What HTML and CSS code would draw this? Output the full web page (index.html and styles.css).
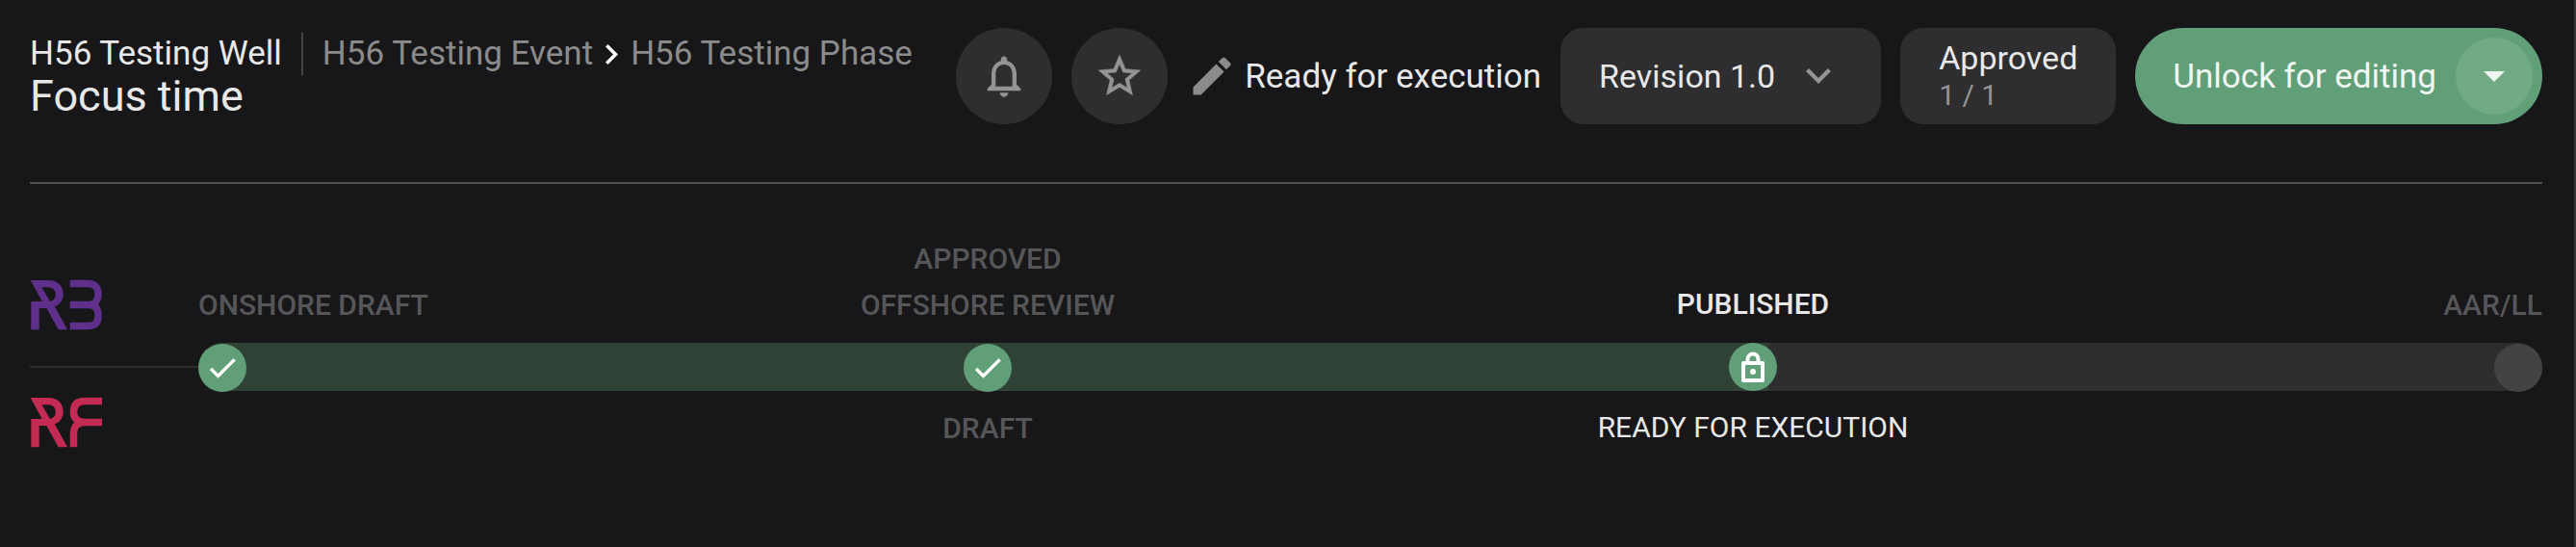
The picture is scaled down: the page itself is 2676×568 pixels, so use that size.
FILE: index.html
```html
<!DOCTYPE html>
<html lang="en">
<head>
  <meta charset="UTF-8">
  <title>Focus time</title>
  <meta name="viewport" content="width=device-width, initial-scale=1.0">
  <link rel="stylesheet" href="styles.css">
</head>
<body>

<header class="header">
  <div class="titles">
    <nav class="breadcrumb" aria-label="Breadcrumb">
      <a class="well" href="#">H56 Testing Well</a>
      <a href="#">H56 Testing Event</a>
      <svg class="crumb-arrow" viewBox="8.590 6 7.410 12"><path d="M10 6L8.590 7.410 13.170 12l-4.580 4.590L10 18l6-6z"/></svg>
      <a href="#">H56 Testing Phase</a>
    </nav>
    <h1>Focus time</h1>
  </div>

  <div class="actions">
    <button class="icon-btn" aria-label="Notifications">
      <svg viewBox="0 0 24 24"><path d="M12 22c1.100 0 2-.9 2-2h-4c0 1.100.9 2 2 2zm6-6v-5c0-3.070-1.630-5.640-4.500-6.320V4c0-.83-.67-1.500-1.500-1.500s-1.500.67-1.500 1.500v.68C7.640 5.360 6 7.920 6 11v5l-2 2v1h16v-1l-2-2zm-2 1H8v-6c0-2.480 1.510-4.500 4-4.500s4 2.020 4 4.500v6z"/></svg>
    </button>
    <button class="icon-btn" aria-label="Favourite">
      <svg class="star" viewBox="0 0 24 24"><path d="M22 9.240l-7.190-.62L12 2 9.190 8.630 2 9.240l5.460 4.730L5.820 21 12 17.270 18.180 21l-1.630-7.030L22 9.240zM12 15.400l-3.760 2.270 1-4.280-3.320-2.880 4.380-.38L12 6.100l1.710 4.040 4.380.38-3.320 2.880 1 4.280L12 15.400z"/></svg>
    </button>
    <div class="status">
      <svg viewBox="0 0 24 24"><path d="M3 17.250V21h3.750L17.810 9.940l-3.750-3.750L3 17.250zM20.710 7.040c.39-.39.39-1.020 0-1.410l-2.340-2.340c-.39-.39-1.020-.39-1.410 0l-1.830 1.830 3.750 3.750 1.830-1.830z"/></svg>
      <span>Ready for execution</span>
    </div>
    <button class="card revision">
      <span>Revision 1.0</span>
      <svg viewBox="6 8.590 12 7.410"><path d="M16.590 8.590L12 13.170 7.410 8.590 6 10l6 6 6-6z"/></svg>
    </button>
    <div class="card approved">
      <span>Approved</span>
      <span class="count">1 / 1</span>
    </div>
    <div class="unlock">
      <button class="unlock-main">Unlock for editing</button>
      <button class="unlock-more" aria-label="More options">
        <svg viewBox="0 0 22 11"><path d="M0 0h22L11 11z"/></svg>
      </button>
    </div>
  </div>
</header>

<main class="progress">
  <div class="logos">
    <svg class="logo rb" viewBox="0 0 76 53" role="img" aria-label="RB">
      <path class="solid" d="M.7 1H19c10 0 15.700 6 15.700 14.500 0 6-3.500 11-9 12.800L39 52.300h-9.300L17.300 30H9.700v22.300H1.300V23h11.400zM12.300 8.300L21 23c3.700-.8 5.700-3.500 5.700-7.300 0-4.600-2.900-7.400-7.700-7.400z"/>
      <path d="M41.700 4.500H60c8 0 11 4.500 11 10.500S68 26.500 62 26.500H41.700M62 26.500c6 0 9 4 9 10.500v1c0 7-3 10.500-11 10.500H41.700"/>
    </svg>
    <svg class="logo rf" viewBox="0 0 76 53" role="img" aria-label="RF">
      <path class="solid" d="M.7 1H19c10 0 15.700 6 15.700 14.500 0 6-3.500 11-9 12.800L39 52.300h-9.300L17.300 30H9.700v22.300H1.300V23h11.400zM12.300 8.300L21 23c3.700-.8 5.700-3.500 5.700-7.300 0-4.600-2.900-7.400-7.700-7.400z"/>
      <path d="M75 4.500H57c-8 0-11.500 4-11.500 11s4 11 11.500 11h18M57 26.500c-7 0-11.500 4-11.500 11v14.800"/>
    </svg>
  </div>
  <ol class="stages">
    <li class="stage first">
      <div class="above"><span>Onshore draft</span></div>
      <div class="dot done"><svg viewBox="0 0 24 24"><path d="M9 16.170L4.830 12l-1.420 1.410L9 19 21 7l-1.410-1.410z"/></svg></div>
      <div class="below"></div>
    </li>
    <li class="stage">
      <div class="above"><span>Approved</span><span>Offshore review</span></div>
      <div class="dot done"><svg viewBox="0 0 24 24"><path d="M9 16.170L4.830 12l-1.420 1.410L9 19 21 7l-1.410-1.410z"/></svg></div>
      <div class="below">Draft</div>
    </li>
    <li class="stage current">
      <div class="above"><span>Published</span></div>
      <div class="dot done"><svg class="lock" viewBox="0 0 24 32"><path d="M6.500 11V8a5.500 5.500 0 0 1 11 0v3M2 12h20v18H2z"/><circle cx="12" cy="21" r="3"/></svg></div>
      <div class="below">Ready for execution</div>
    </li>
    <li class="stage last">
      <div class="above"><span>AAR/LL</span></div>
      <div class="dot"></div>
      <div class="below"></div>
    </li>
  </ol>
</main>

</body>
</html>
```
FILE: styles.css
```css
* { box-sizing: border-box; }
body { margin: 0; min-height: 100vh; padding: 0 33px 0 31px; background: #171719; color: #e8e8e8; font-family: Roboto, sans-serif; font-size: 35px; border-right: 2px solid #353537; }
button { font: inherit; color: inherit; border: none; padding: 0; cursor: pointer; }
a { color: inherit; text-decoration: none; }
svg { display: block; flex: none; }

.header { display: flex; justify-content: space-between; align-items: flex-start; padding: 29px 0 60px; border-bottom: 2px solid #505052; }
.titles { padding-top: 5px; }
.breadcrumb { display: flex; align-items: center; height: 44px; line-height: 44px; color: #8b8b8b; white-space: nowrap; }
.breadcrumb .well { color: #e8e8e8; padding-right: 20px; margin-right: 20px; border-right: 2px solid #444446; }
.crumb-arrow { width: 13px; height: 21px; margin: 0 13px; fill: #fff; }
h1 { margin: 0; font-size: 45px; line-height: 44px; font-weight: 400; }

.actions { display: flex; align-items: center; gap: 20px; white-space: nowrap; }
.icon-btn { width: 100px; height: 100px; border-radius: 50%; background: #2e2e30; display: flex; align-items: center; justify-content: center; }
.icon-btn svg { width: 52px; height: 52px; fill: #949494; }
.icon-btn .star { stroke: #949494; stroke-width: .3; }
.status { display: flex; align-items: center; gap: 8px; }
.status svg { width: 52px; height: 52px; fill: #8b8b8b; }
.card { height: 100px; padding: 0 40px; border-radius: 24px; background: #2e2e30; font-size: 34px; }
.revision { display: flex; align-items: center; gap: 32px; padding-right: 52px; }
.revision svg { width: 26px; height: 16px; fill: #949494; }
.approved { display: flex; flex-direction: column; justify-content: center; padding-top: 2px; line-height: 38px; }
.approved .count { font-size: 30px; line-height: 40px; color: #949494; }
.unlock { display: flex; align-items: center; gap: 20px; height: 100px; padding: 0 10px 0 39px; border-radius: 50px; background: #619f78; color: #f0f6f2; }
.unlock-main { background: none; }
.unlock-more { width: 80px; height: 80px; border-radius: 50%; background: #72aa86; display: flex; align-items: center; justify-content: center; }
.unlock-more svg { width: 22px; height: 11px; fill: #f0f6f2; }

.progress { display: flex; padding-top: 53px; }
.logos { position: relative; width: 175px; height: 276px; padding-top: 46px; }
.logos::after { content: ""; position: absolute; left: 0; right: 0; top: 136px; height: 2px; background: #2e2e30; }
.logo { width: 76px; height: 53px; fill: none; stroke-width: 7.5; }
.logo .solid { stroke: none; }
.rb { stroke: #5f2f8c; }
.rb .solid { fill: #5f2f8c; }
.rf { stroke: #c42b52; margin-top: 69px; }
.rf .solid { fill: #c42b52; }

.stages { position: relative; flex: 1; display: flex; justify-content: space-between; margin: 0; padding: 0; list-style: none; font-size: 30px; line-height: 48px; color: #565658; font-weight: 500; text-transform: uppercase; }
.stages::before { content: ""; position: absolute; left: 0; right: 0; top: 112px; height: 50px; border-radius: 25px; background: linear-gradient(to right, #304236 67%, #2e2e30 67%); }
.stage { position: relative; width: 50px; display: flex; flex-direction: column; align-items: center; white-space: nowrap; }
.above { display: flex; flex-direction: column; align-items: center; justify-content: flex-end; height: 113px; padding-bottom: 16px; }
.first { align-items: flex-start; }
.last { align-items: flex-end; }
.dot { flex: none; width: 50px; height: 50px; border-radius: 50%; background: #434345; display: flex; align-items: center; justify-content: center; }
.done { background: #619f78; }
.dot svg { width: 36px; height: 36px; fill: #fff; stroke: #fff; stroke-width: .4; }
.dot .lock { width: 24px; height: 32px; stroke-width: 4; stroke-linejoin: round; }
.lock path { fill: none; }
.lock circle { stroke: none; }
.below { padding-top: 14px; }
.current { color: #e8e8e8; }
.current .above { height: 112px; }
.current .below { font-weight: 400; }
```
